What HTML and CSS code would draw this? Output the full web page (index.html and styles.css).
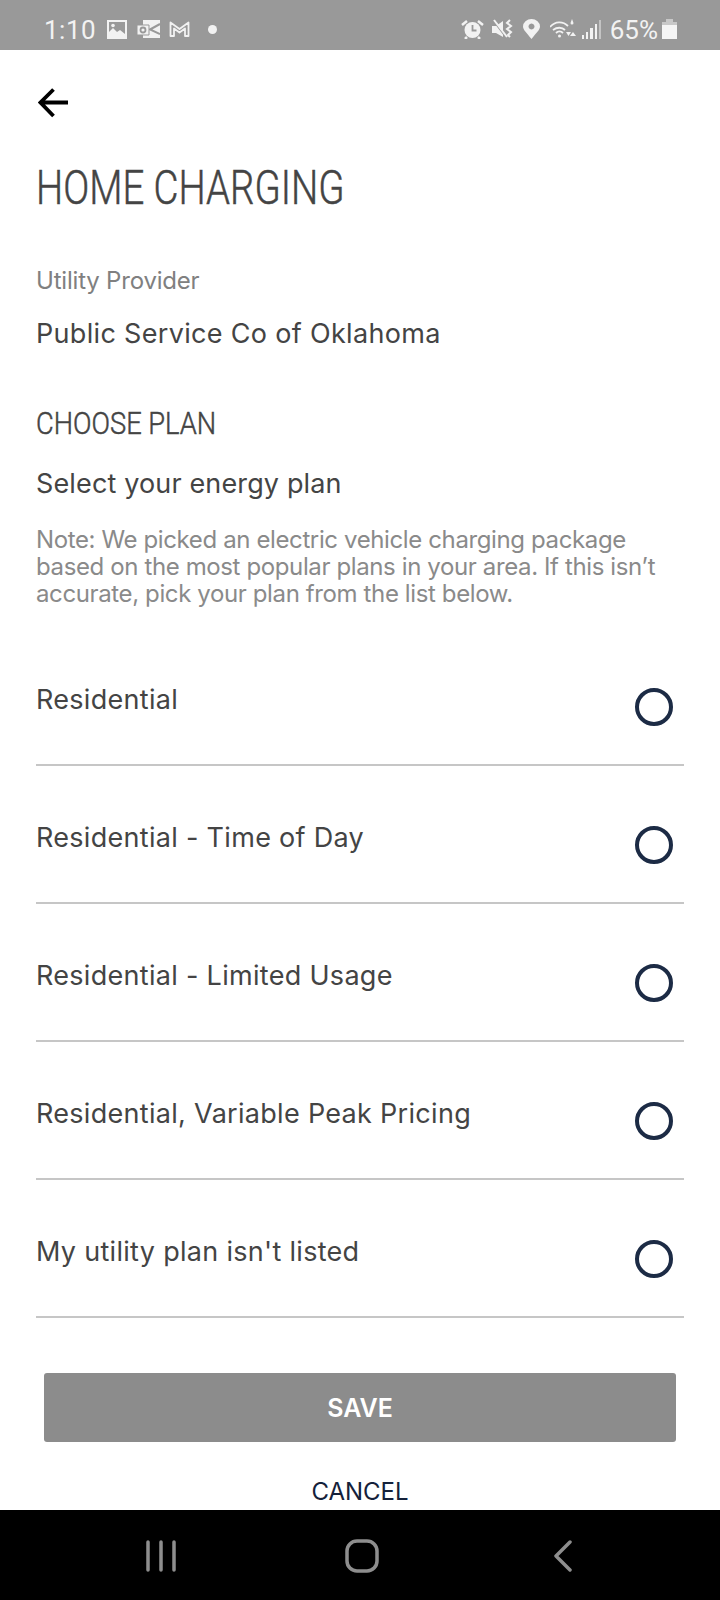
FILE: index.html
```html
<!DOCTYPE html>
<html lang="en">
<head>
    <meta charset="UTF-8">
    <title>Home Charging</title>
    <link rel="stylesheet" href="styles.css">
</head>
<body>
<div class="status-bar">
    <div class="status-left">
        <span class="time">1:10</span>
        <svg class="ico-image" width="20" height="19" viewBox="0 0 20 19"><path fill="#f2f2f2" fill-rule="evenodd" d="M0 0h20v19H0z M2 2v10l4-4 4 4 3-2 5 4V2z"/><circle cx="6" cy="5.500" r="1.800" fill="#f2f2f2"/></svg>
        <svg class="ico-outlook" width="23" height="18" viewBox="0 0 23 18"><path fill="#f2f2f2" d="M6 0h17v18H6z"/><path fill="none" stroke="#999" stroke-width="2" d="M23 4l-10 5.500L23 14"/><path fill="#f2f2f2" stroke="#999" d="M0 5h12v10H0z"/><circle cx="6" cy="10" r="2.500" fill="none" stroke="#999" stroke-width="1.800"/></svg>
        <svg class="ico-gmail" width="21" height="16" viewBox="0 0 21 16"><path fill="none" stroke="#f2f2f2" stroke-width="1.800" stroke-linejoin="round" d="M1.500 15V1.500L10.500 8 19.500 1.500V15h-3.500V7.500l-5.500 4-5.500-4V15z"/></svg>
        <span class="dot"></span>
    </div>
    <div class="status-right">
        <svg class="ico-alarm" width="23" height="20" viewBox="0 0 23 20"><circle cx="11.500" cy="11" r="8" fill="#f2f2f2"/><path stroke="#999" stroke-width="1.800" fill="none" d="M11.500 6v5.500h4"/><path stroke="#f2f2f2" stroke-width="2.500" d="M1 6l5-4 M22 6l-5-4 M6 18l-2 2 M17 18l2 2"/></svg>
        <svg class="ico-mute" width="21" height="20" viewBox="0 0 21 20"><path fill="#f2f2f2" d="M0 7h4l7-5v16l-7-4H0z"/><path stroke="#999" stroke-width="2" d="M1 1l13 17"/><path stroke="#f2f2f2" stroke-width="2" d="M2 1l13 17"/><path fill="none" stroke="#f2f2f2" stroke-width="2" d="M18 1l-3 3 4 3-4 3 4 3-3 3 2 2"/></svg>
        <svg class="ico-pin" width="17" height="20" viewBox="0 0 17 20"><path fill="#f2f2f2" fill-rule="evenodd" d="M8.500 20C4 14 0 11 0 7.500a8.500 7.500 0 0 1 17 0C17 11 13 14 8.500 20z M8.500 4.500a3 3 0 1 0 .01 0z"/></svg>
        <svg class="ico-wifi" width="26" height="20" viewBox="0 0 26 20"><path fill="none" stroke="#f2f2f2" stroke-width="1.800" d="M0 8c5-6 13-6 18-1 M3 11c4-3 9-3 12 0 M6 14c2-2 5-2 7 0"/><circle cx="9.500" cy="17" r="1.500" fill="#f2f2f2"/><path fill="#f2f2f2" d="M22 0l1.500 4a1.500 1.500 0 0 1-3 0z M16 13h5l-2.500 4z M20 17l3-4 3 4z"/></svg>
        <svg class="ico-signal" width="19" height="20" viewBox="0 0 19 20"><path fill="#f2f2f2" d="M0 16h2v4H0z M4 13h2v7H4z M8 9h3v11H8z M13 5h2v15h-2z"/><path fill="#c4c4c4" d="M17 1h2v19h-2z"/></svg>
        <span class="battery-text">65%</span>
        <svg class="ico-battery" width="15" height="20" viewBox="0 0 15 20"><path fill="#c8c8c8" d="M4 0h7v3h4v4H0V3h4z"/><path fill="#f5f5f5" d="M0 6h15v14H0z"/></svg>
    </div>
</div>

<div class="main">
    <div class="back">
        <svg width="30" height="30" viewBox="0 0 30 30"><path fill="none" stroke="#000" stroke-width="3.800" d="M30 14.500H3 M15.500 1.500L2.500 14.500 15.500 28"/></svg>
    </div>
    <h1 class="title"><span>HOME CHARGING</span></h1>
    <div class="label">Utility Provider</div>
    <div class="value">Public Service Co of Oklahoma</div>
    <h2 class="subtitle"><span>CHOOSE PLAN</span></h2>
    <div class="select">Select your energy plan</div>
    <div class="note">Note: We picked an electric vehicle charging package based on the most popular plans in your area. If this isn’t accurate, pick your plan from the list below.</div>

    <div class="plans">
        <div class="plan"><span>Residential</span><i class="radio"></i></div>
        <div class="plan"><span>Residential - Time of Day</span><i class="radio"></i></div>
        <div class="plan"><span>Residential - Limited Usage</span><i class="radio"></i></div>
        <div class="plan"><span>Residential, Variable Peak Pricing</span><i class="radio"></i></div>
        <div class="plan"><span>My utility plan isn't listed</span><i class="radio"></i></div>
    </div>

    <div class="save">SAVE</div>
    <div class="cancel">CANCEL</div>
</div>

<div class="nav-bar">
    <svg class="nav-recent" width="30" height="32" viewBox="0 0 30 32"><path stroke="#8e8e8e" stroke-width="3.500" stroke-linecap="round" d="M2 2v28 M15 2v28 M28 2v28"/></svg>
    <svg class="nav-home" width="34" height="34" viewBox="0 0 34 34"><rect x="2" y="2" width="30" height="30" rx="10" fill="none" stroke="#8e8e8e" stroke-width="3.500"/></svg>
    <svg class="nav-back" width="20" height="32" viewBox="0 0 20 32"><path fill="none" stroke="#8e8e8e" stroke-width="3.500" stroke-linecap="round" stroke-linejoin="round" d="M17 2L3 16l14 14"/></svg>
</div>
</body>
</html>
```

FILE: styles.css
```css
body {
    margin: 0;
    height: 1600px;
    display: flex;
    flex-direction: column;
    background: #fff;
    font-family: "Inter", "Noto Sans", sans-serif;
    overflow: hidden;
}

/* status bar */
.status-bar {
    height: 50px;
    flex: none;
    box-sizing: border-box;
    background: #999;
    display: flex;
    justify-content: space-between;
    align-items: center;
    padding: 8px 43px 0 44px;
    color: #f2f2f2;
    font-family: "Roboto", sans-serif;
}
.status-left,
.status-right {
    display: flex;
    align-items: center;
}
.time {
    font-size: 26px;
    width: 63px;
    line-height: 32px;
    letter-spacing: 0.5px;
    padding-top: 2px;
}
.ico-outlook {
    margin-left: 10px;
}
.ico-gmail {
    margin-left: 9px;
}
.dot {
    width: 9px;
    height: 9px;
    margin-left: 18px;
    border-radius: 50%;
    background: #f2f2f2;
}
.ico-mute {
    margin-left: 8px;
}
.ico-pin {
    margin-left: 10px;
}
.ico-wifi {
    margin-left: 10px;
}
.ico-signal {
    margin-left: 6px;
}
.battery-text {
    font-size: 26px;
    line-height: 32px;
    margin-left: 9px;
    padding-top: 2px;
}
.ico-battery {
    margin-left: 4px;
}

/* page */
.main {
    flex: 1;
    padding: 38px 36px 0;
}
.back {
    height: 30px;
    padding-left: 2px;
}
.title,
.subtitle {
    margin: 0;
    font-family: "Roboto", sans-serif;
    font-weight: 300;
    color: #444;
    white-space: nowrap;
    -webkit-text-stroke: 0.5px #444;
}
.title span,
.subtitle span {
    display: inline-block;
    transform-origin: left center;
}
.title {
    margin-top: 42px;
    font-size: 48px;
    line-height: 56px;
}
.title span {
    transform: scaleX(0.8);
}
.label {
    margin-top: 50px;
    font-size: 24px;
    line-height: 30px;
    letter-spacing: -0.2px;
    color: #808080;
}
.value {
    margin-top: 21px;
    font-size: 27px;
    line-height: 34px;
    letter-spacing: 0.32px;
    color: #444;
}
.subtitle {
    margin-top: 55px;
    font-size: 31px;
    line-height: 36px;
}
.subtitle span {
    transform: scaleX(0.88);
}
.select {
    margin-top: 25px;
    font-size: 27px;
    line-height: 34px;
    letter-spacing: 0.14px;
    color: #444;
}
.note {
    margin-top: 25px;
    font-size: 24px;
    line-height: 27px;
    letter-spacing: -0.38px;
    color: #8a8a8a;
}

.plans {
    margin-top: 21px;
}
.plan {
    height: 136px;
    border-bottom: 2px solid #c6c6c6;
    display: flex;
    justify-content: space-between;
    font-size: 27px;
    line-height: 34px;
    letter-spacing: 0.3px;
    color: #444;
}
.plan span {
    padding-top: 55px;
}
.radio {
    width: 30px;
    height: 30px;
    margin: 60px 11px 0 0;
    border: 4px solid #1c2b45;
    border-radius: 50%;
}

.save {
    margin: 55px 8px 0;
    height: 69px;
    line-height: 71px;
    background: #8c8c8c;
    border-radius: 3px;
    text-align: center;
    color: #fff;
    font-size: 25px;
    font-weight: 600;
}
.cancel {
    margin-top: 35px;
    text-align: center;
    font-size: 24px;
    line-height: 30px;
    color: #14213a;
}

.nav-bar {
    height: 90px;
    flex: none;
    box-sizing: border-box;
    background: #000;
    display: flex;
    align-items: center;
    padding: 2px 0 0 146px;
}
.nav-home {
    margin-left: 169px;
}
.nav-back {
    margin-left: 174px;
}
```
